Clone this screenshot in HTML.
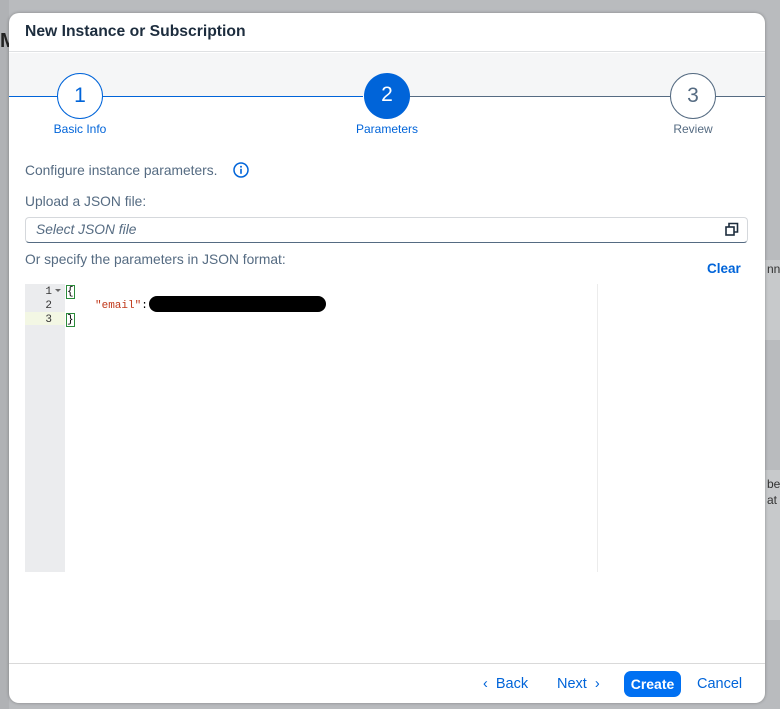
<!DOCTYPE html>
<html><head><style>
*{box-sizing:border-box;margin:0;padding:0}
body{width:780px;height:709px;overflow:hidden;background:#b9bbbe;font-family:"Liberation Sans",sans-serif;position:relative}
.bgc{position:absolute;left:0;width:9px;background:#c4c6c8}
.dlg{position:absolute;left:9px;top:13px;width:756px;height:690px;background:#fff;border-radius:10px;overflow:hidden;box-shadow:0 0 3px rgba(0,0,0,.3)}
.hdr{height:39px;border-bottom:1px solid #dfe1e3;padding:10px 0 0 16px;font-weight:bold;font-size:15.7px;color:#1d2d3e}
.steps{position:absolute;top:40px;left:0;right:0;height:43px;background:#f5f6f7}
.line{position:absolute;top:83px;height:1px}
.circ{position:absolute;width:46px;height:46px;border-radius:50%;text-align:center;line-height:44px;font-size:21px}
.lbl{position:absolute;font-size:12px;text-align:center;width:100px}
.t{position:absolute;font-size:13.8px;color:#556b82}
.mono{font-family:"Liberation Mono",monospace;font-size:11px}
</style></head><body>
<div class="bgc" style="top:0;height:709px;background:#b0b2b5"></div>
<div style="position:absolute;left:0;top:30px;font-weight:bold;font-size:20px;color:#222">M</div>
<div style="position:absolute;left:765px;top:260px;width:15px;height:80px;background:#c7c9cb"></div>
<div style="position:absolute;left:765px;top:470px;width:15px;height:150px;background:#c7c9cb"></div>
<div style="position:absolute;left:767px;top:262px;font-size:12px;color:#333">nno</div>
<div style="position:absolute;left:767px;top:476px;font-size:12px;color:#333;line-height:16px">be<br>at</div>
<div class="dlg">
<div class="hdr">New Instance or Subscription</div>
<div class="steps"></div>
<div class="line" style="left:0;width:354px;background:#0064d9"></div>
<div class="line" style="left:400px;right:0;background:#556b82;"></div>
<div class="circ" style="left:48px;top:60px;border:1.5px solid #0064d9;color:#0064d9;background:#fff">1</div>
<div class="circ" style="left:355px;top:60px;background:#0064d9;color:#fff">2</div>
<div class="circ" style="left:661px;top:60px;border:1px solid #556b82;color:#556b82;background:#fff">3</div>
<div class="lbl" style="left:21px;top:109px;color:#0064d9">Basic Info</div>
<div class="lbl" style="left:328px;top:109px;color:#0064d9">Parameters</div>
<div class="lbl" style="left:634px;top:109px;color:#556b82">Review</div>
<div class="t" style="left:16px;top:150px">Configure instance parameters.</div>
<svg style="position:absolute;left:224px;top:149px" width="16" height="16" viewBox="0 0 16 16"><circle cx="8" cy="8" r="7" fill="none" stroke="#0064d9" stroke-width="1.5"/><circle cx="8" cy="4.8" r="1" fill="#0064d9"/><rect x="7.2" y="6.8" width="1.6" height="5" fill="#0064d9"/></svg>
<div class="t" style="left:16px;top:181px">Upload a JSON file:</div>
<div style="position:absolute;left:16px;top:204px;width:723px;height:26px;border:1px solid #d5d8dc;border-bottom-color:#556b82;border-radius:4px"></div>
<div class="t" style="left:27px;top:209px;font-style:italic;color:#556b82">Select JSON file</div>
<svg style="position:absolute;left:715px;top:208px" width="16" height="16" viewBox="0 0 16 16" fill="none" stroke="#1d2d3e" stroke-width="1.6"><rect x="2" y="6" width="8" height="8"/><path d="M5 6V2.5h8.5V11H10"/></svg>
<div class="t" style="left:16px;top:239px">Or specify the parameters in JSON format:</div>
<div style="position:absolute;left:698px;top:248px;font-size:13.5px;font-weight:bold;color:#0064d9">Clear</div>
<div style="position:absolute;left:16px;top:271px;width:40px;height:288px;background:#ebecee"></div>
<div style="position:absolute;left:16px;top:299px;width:40px;height:13px;background:#f3f7e4"></div>
<div style="position:absolute;left:588px;top:271px;width:1px;height:288px;background:#ececec"></div>
<div class="mono" style="position:absolute;left:16px;top:272px;width:27px;text-align:right;line-height:14px;color:#333">1<br>2<br>3</div>
<div style="position:absolute;left:46px;top:276px;border-left:3px solid transparent;border-right:3px solid transparent;border-top:3px solid #666"></div>
<div class="mono" style="position:absolute;left:58px;top:272px;line-height:14px;color:#000"><span style="outline:1px solid #2a8a3a">{</span><br><span style="margin-left:28px;color:#c0391b">"email"</span>:<br><span style="outline:1px solid #2a8a3a">}</span></div>
<div style="position:absolute;left:140px;top:283px;width:177px;height:16px;background:#000;border-radius:8px"></div>
<div style="position:absolute;left:0;right:0;top:650px;height:1px;background:#d9d9d9"></div>
<div style="position:absolute;left:474px;top:663px;font-size:14.5px;color:#0064d9">‹&nbsp; Back</div>
<div style="position:absolute;left:548px;top:663px;font-size:14.5px;color:#0064d9">Next&nbsp; ›</div>
<div style="position:absolute;left:615px;top:658px;width:57px;height:26px;border-radius:7px;background:#0070f2;color:#fff;font-weight:bold;font-size:14px;text-align:center;line-height:26px">Create</div>
<div style="position:absolute;left:688px;top:663px;font-size:14.5px;color:#0064d9">Cancel</div>
</div>
</body></html>
